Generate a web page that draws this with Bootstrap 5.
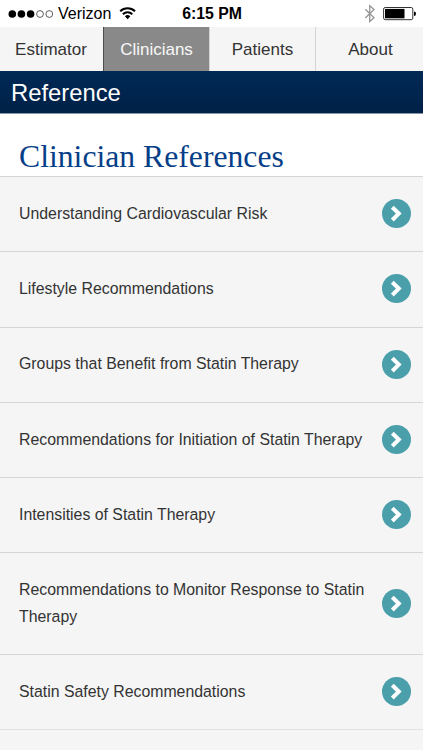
<!DOCTYPE html>
<html lang="en">
<head>
<meta charset="utf-8">
<meta name="viewport" content="width=device-width, initial-scale=1">
<title>Clinician References</title>
<link rel="stylesheet" href="https://cdn.jsdelivr.net/npm/bootstrap@5.3.0/dist/css/bootstrap.min.css">
<style>
body{font-family:"Liberation Sans",Arial,sans-serif;color:#333;background:#f5f5f5;height:750px}
.statusbar{height:27px;color:#000;font-size:16px;line-height:27px}
.statusbar>div{flex:1 1 0}
.statusbar .clock{flex:0 0 auto;font-size:15.8px;padding-left:1px}
.tabs{height:44px;background:#f5f5f5}
.tabs .nav-link{color:#333;font-size:17px;line-height:44px;padding:1px 0 0;border-radius:0;border-left:1px solid #d4d4d4;height:44px}
.tabs .nav-link.first{border-left:0;flex:0 0 103px;padding-right:1px}
.tabs .mid{flex:0 0 106px}
.tabs .nav-link.last{padding-left:2px}
.tabs .nav-link.active{background:#898989;color:#f8f8f8;border-left:1px solid #4c4c4c}
.titlebar{height:43px;background:linear-gradient(#002955,#002148);border-bottom:1px solid #8995a6;color:#fff;font-size:23.8px;line-height:44px;padding-left:11px}
.heading{height:62px;background:#fff;color:#063e88;font-family:"Liberation Serif","Times New Roman",serif;font-size:31.7px;line-height:40px;padding:23px 0 0 19px}
.refs .list-group-item{background:#f5f5f5;color:#333;border:0;border-top:1px solid #d6d6d6;padding:23.93px 12px 23.93px 19px;font-size:15.85px;line-height:26.4px}
.refs svg{width:29px;height:29px;flex:none;margin:-2px 0 -1px}
</style>
<script src="https://cdn.jsdelivr.net/npm/bootstrap@5.3.0/dist/js/bootstrap.bundle.min.js"></script>
</head>
<body class="overflow-hidden">
<svg class="d-none"><symbol id="go" viewBox="0 0 29 29"><circle cx="14.5" cy="14.5" r="14.5" fill="#4a9fab"/><path d="M10.3 8.2 16.8 14.6 10.3 21" fill="none" stroke="#fff" stroke-width="4"/></symbol></svg>
<header>
  <div class="statusbar bg-white d-flex align-items-center">
    <div class="d-flex align-items-center">
      <svg width="58" height="27" viewBox="0 0 58 27" class="flex-shrink-0"><g fill="#000"><circle cx="12.3" cy="14" r="3.8"/><circle cx="21.4" cy="14" r="3.8"/><circle cx="30.6" cy="14" r="3.8"/></g><g fill="none" stroke="#333" stroke-width=".8"><circle cx="40" cy="14" r="3.4"/><circle cx="49.3" cy="14" r="3.4"/></g></svg>
      <span class="carrier">Verizon</span>
      <svg width="18" height="27" viewBox="0 0 18 27" class="ms-2 flex-shrink-0"><g fill="none" stroke="#000" stroke-width="2"><path d="M1.2 11.2a10.6 10.6 0 0 1 14.8 0"/><path d="M3.9 14.2a6.7 6.7 0 0 1 9.4 0"/></g><path d="M8.6 19.2 5.9 16.3a4 4 0 0 1 5.4 0Z"/></svg>
    </div>
    <div class="clock fw-bold">6:15 PM</div>
    <div class="d-flex justify-content-end">
      <svg width="60" height="27" viewBox="363 0 60 27"><path d="M365.3 9.3 374 17.7 369.7 21.6V5.7L374 9.5 365.3 18" fill="none" stroke="#969696" stroke-width="1.3"/><rect x="383.6" y="7.5" width="29.2" height="12.2" rx="1.6" fill="#fff" stroke="#333"/><rect x="385" y="8.9" width="19.5" height="9.4"/><path d="M414 11.6q2 0 2 2.2t-2 2.2Z"/></svg>
    </div>
  </div>
  <nav class="tabs nav nav-fill flex-nowrap">
    <a class="nav-link first" href="#">Estimator</a>
    <a class="nav-link mid active" href="#">Clinicians</a>
    <a class="nav-link mid" href="#">Patients</a>
    <a class="nav-link last" href="#">About</a>
  </nav>
  <div class="titlebar">Reference</div>
</header>
<main>
  <h1 class="heading m-0 fw-normal">Clinician References</h1>
  <div class="refs list-group list-group-flush border-bottom">
    <a class="list-group-item d-flex align-items-center justify-content-between" href="#"><span>Understanding Cardiovascular Risk</span><svg><use href="#go"/></svg></a>
    <a class="list-group-item d-flex align-items-center justify-content-between" href="#"><span>Lifestyle Recommendations</span><svg><use href="#go"/></svg></a>
    <a class="list-group-item d-flex align-items-center justify-content-between" href="#"><span>Groups that Benefit from Statin Therapy</span><svg><use href="#go"/></svg></a>
    <a class="list-group-item d-flex align-items-center justify-content-between" href="#"><span>Recommendations for Initiation of Statin Therapy</span><svg><use href="#go"/></svg></a>
    <a class="list-group-item d-flex align-items-center justify-content-between" href="#"><span>Intensities of Statin Therapy</span><svg><use href="#go"/></svg></a>
    <a class="list-group-item d-flex align-items-center justify-content-between" href="#"><span>Recommendations to Monitor Response to Statin Therapy</span><svg><use href="#go"/></svg></a>
    <a class="list-group-item d-flex align-items-center justify-content-between" href="#"><span>Statin Safety Recommendations</span><svg><use href="#go"/></svg></a>
  </div>
</main>
</body>
</html>
